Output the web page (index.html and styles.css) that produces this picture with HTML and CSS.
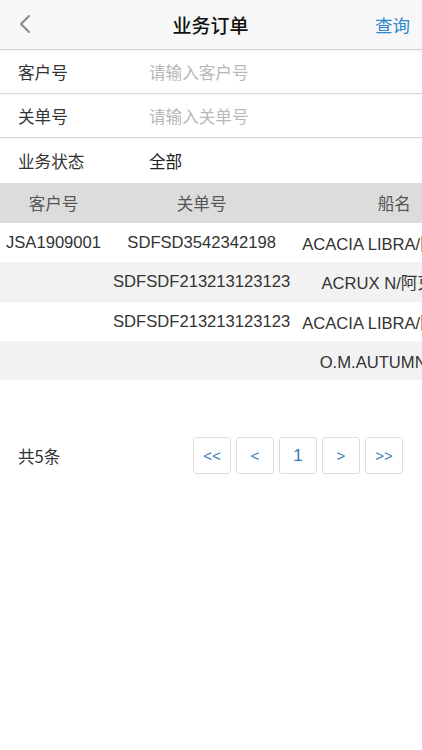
FILE: index.html
```html
<!DOCTYPE html>
<html lang="zh-CN">
<head>
<meta charset="utf-8">
<title>业务订单</title>
<link rel="stylesheet" href="styles.css">
</head>
<body>
<div class="page">
  <header class="topbar">
    <span class="back">
      <svg width="14" height="20" viewBox="0 0 14 20"><polyline points="11,2 3,10 11,18" fill="none" stroke="#8a8a8a" stroke-width="2" stroke-linecap="round" stroke-linejoin="round"/></svg>
    </span>
    <h1 class="title">业务订单</h1>
    <span class="action">查询</span>
  </header>

  <div class="form">
    <div class="form-row">
      <span class="label">客户号</span>
      <span class="placeholder">请输入客户号</span>
    </div>
    <div class="form-row">
      <span class="label">关单号</span>
      <span class="placeholder">请输入关单号</span>
    </div>
    <div class="form-row last">
      <span class="label">业务状态</span>
      <span class="value">全部</span>
    </div>
  </div>

  <div class="table-wrap">
    <table class="grid">
      <thead>
        <tr><th>客户号</th><th>关单号</th><th>船名</th><th>航次</th></tr>
      </thead>
      <tbody>
        <tr><td>JSA1909001</td><td>SDFSD3542342198</td><td>ACACIA LIBRA/阿卡西亚</td><td>1909E</td></tr>
        <tr class="alt"><td></td><td>SDFSDF213213123123</td><td>ACRUX N/阿克鲁斯</td><td>1910E</td></tr>
        <tr><td></td><td>SDFSDF213213123123</td><td>ACACIA LIBRA/阿卡西亚</td><td>1909E</td></tr>
        <tr class="alt"><td></td><td></td><td>O.M.AUTUMN /秋天</td><td>1911E</td></tr>
      </tbody>
    </table>
  </div>

  <div class="pager">
    <span class="total">共5条</span>
    <div class="pages">
      <span class="pg">&lt;&lt;</span>
      <span class="pg">&lt;</span>
      <span class="pg num">1</span>
      <span class="pg">&gt;</span>
      <span class="pg">&gt;&gt;</span>
    </div>
  </div>
</div>
</body>
</html>
```

FILE: styles.css
```css
* { box-sizing: border-box; }
html, body {
  margin: 0;
  padding: 0;
  background: #ffffff;
}
body {
  font-family: "Liberation Sans", "Noto Sans CJK SC", Arial, sans-serif;
  color: #333333;
  width: 422px;
  overflow: hidden;
}
.page {
  width: 422px;
}
.topbar {
  height: 50px;
  background: #f7f7f7;
  border-bottom: 1px solid #d4d4d4;
  box-shadow: 0 1px 2px rgba(0,0,0,0.06);
  display: flex;
  align-items: center;
  justify-content: space-between;
  padding: 0 12px 1px 18px;
}
.back {
  display: flex;
  align-items: center;
  width: 33px;
}
.title {
  margin: 0;
  font-size: 19px;
  font-weight: 500;
  color: #111111;
  font-family: "Noto Sans CJK SC", sans-serif;
}
.action {
  width: 40px;
  text-align: right;
  font-size: 17.5px;
  color: #2a86d1;
  font-family: "Noto Sans CJK SC", sans-serif;
}
.form-row {
  height: 44px;
  display: flex;
  align-items: center;
  border-bottom: 1px solid #d8d8d8;
  box-shadow: 0 1px 1px rgba(0,0,0,0.04);
  padding-left: 18px;
  font-family: "Noto Sans CJK SC", sans-serif;
  font-size: 16.6px;
}
.form-row.last {
  height: 45px;
  border-bottom: none;
  box-shadow: none;
}
.label {
  width: 131px;
  color: #333333;
}
.placeholder {
  color: #b8b8b8;
}
.value {
  color: #222222;
}
.table-wrap {
  width: 422px;
  overflow: hidden;
}
.grid {
  border-collapse: collapse;
  white-space: nowrap;
  font-size: 16.6px;
}
.grid th {
  height: 40px;
  background: #dcdcdc;
  font-weight: normal;
  color: #555555;
  padding: 0 6px;
  text-align: center;
  font-family: "Noto Sans CJK SC", sans-serif;
}
.grid td {
  height: 39.25px;
  padding: 1px 6px 0;
  text-align: center;
  color: #333333;
}
.grid tr.alt td {
  background: #f2f2f2;
}
.pager {
  margin-top: 57px;
  display: flex;
  align-items: center;
  justify-content: space-between;
  padding: 0 19px 0 18px;
}
.total {
  font-family: "Noto Sans CJK SC", sans-serif;
  font-size: 16.6px;
  color: #333333;
}
.pages {
  display: flex;
  gap: 5px;
}
.pg {
  width: 38px;
  height: 37px;
  border: 1px solid #dddddd;
  border-radius: 3px;
  display: flex;
  align-items: center;
  justify-content: center;
  color: #337ab7;
  font-size: 15px;
  background: #ffffff;
}
.pg.num {
  font-size: 17px;
}
```
